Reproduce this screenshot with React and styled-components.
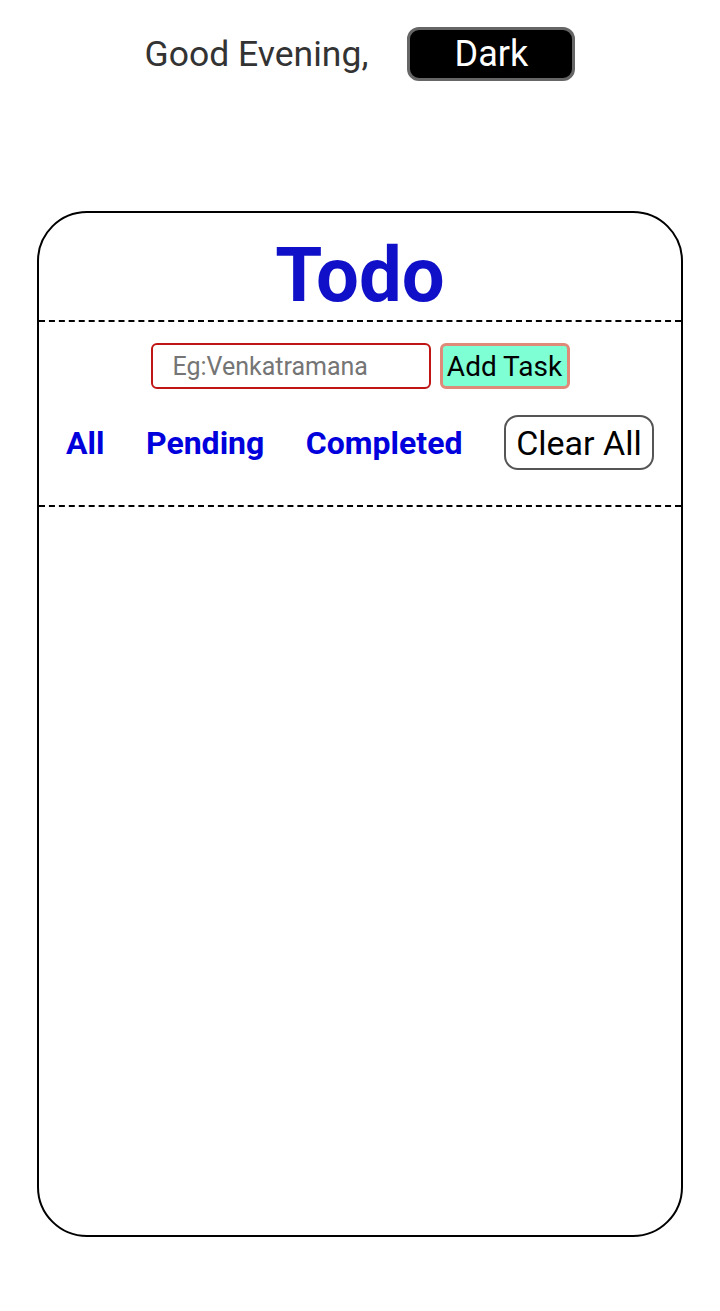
import React from "react";
import styled, { createGlobalStyle } from "styled-components";

const GlobalStyle = createGlobalStyle`
  body {
    margin: 0;
    background: #ffffff;
    font-family: Roboto, "Liberation Sans", sans-serif;
  }
`;

export default function App() {
  return (
    <>
      <GlobalStyle />
      <Page>
        <Greeting>
          <GreetText>Good Evening,</GreetText>
          <ThemeButton>Dark</ThemeButton>
        </Greeting>
        <Card>
          <Title>Todo</Title>
          <Controls>
            <InputRow>
              <TaskInput placeholder="Eg:Venkatramana" />
              <AddButton>Add Task</AddButton>
            </InputRow>
            <FilterRow>
              <FilterLink>All</FilterLink>
              <FilterLink>Pending</FilterLink>
              <FilterLink>Completed</FilterLink>
              <ClearButton>Clear All</ClearButton>
            </FilterRow>
          </Controls>
          <TaskList />
        </Card>
      </Page>
    </>
  );
}

const Page = styled.div`
  width: 720px;
  min-height: 1311px;
  padding-top: 27px;
  box-sizing: border-box;
`;

const Greeting = styled.div`
  display: flex;
  justify-content: center;
  align-items: center;
  gap: 39px;
`;

const GreetText = styled.span`
  font-size: 35.5px;
  color: #333333;
`;

const ThemeButton = styled.button`
  width: 168px;
  height: 54px;
  background: #000000;
  color: #ffffff;
  border: 3px solid #666666;
  border-radius: 12px;
  font-family: Roboto, sans-serif;
  font-size: 36px;
  padding: 0;
`;

const Card = styled.div`
  width: 646px;
  height: 1026px;
  margin: 130px auto 0;
  box-sizing: border-box;
  border: 2.5px solid #000000;
  border-radius: 50px;
  display: flex;
  flex-direction: column;
`;

const Title = styled.h1`
  margin: 0;
  height: 109px;
  box-sizing: border-box;
  padding-top: 16px;
  display: flex;
  align-items: center;
  justify-content: center;
  font-size: 76px;
  font-weight: 700;
  color: #1010c8;
  border-bottom: 2px dashed #000000;
`;

const Controls = styled.div`
  padding: 21px 27px 35px;
  display: flex;
  flex-direction: column;
  gap: 26px;
  border-bottom: 2px dashed #000000;
`;

const InputRow = styled.div`
  display: flex;
  justify-content: center;
  align-items: center;
  gap: 9px;
`;

const TaskInput = styled.input`
  width: 280px;
  height: 46px;
  box-sizing: border-box;
  border: 2.5px solid #c01515;
  border-radius: 6px;
  padding: 0 20px;
  font-family: Roboto, sans-serif;
  font-size: 25px;
  &::placeholder {
    color: #757575;
  }
`;

const AddButton = styled.button`
  width: 130px;
  height: 46px;
  padding: 0;
  background: #7fffd4;
  border: 3px solid #e08a7a;
  border-radius: 6px;
  font-family: Roboto, sans-serif;
  font-size: 28px;
  color: #000000;
`;

const FilterRow = styled.div`
  display: flex;
  align-items: center;
  justify-content: space-between;
`;

const FilterLink = styled.span`
  font-size: 32px;
  font-weight: 700;
  color: #0000dd;
`;

const ClearButton = styled.button`
  width: 150px;
  height: 55px;
  padding: 0;
  background: #ffffff;
  border: 2.5px solid #555555;
  border-radius: 14px;
  font-family: Roboto, sans-serif;
  font-size: 34px;
  color: #000000;
`;

const TaskList = styled.div`
  flex: 1;
`;
